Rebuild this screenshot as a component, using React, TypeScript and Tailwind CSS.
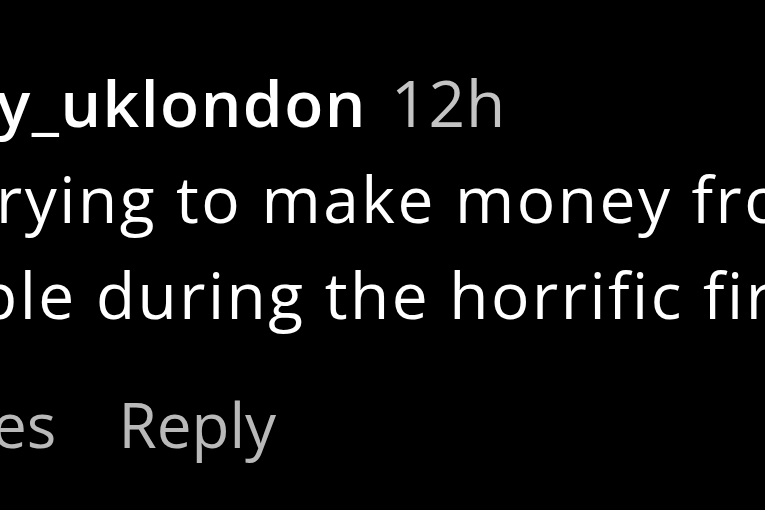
export default function App() {
  return (
    <div
      className="w-[765px] h-[510px] bg-black overflow-hidden text-white"
      style={{ fontFamily: '"Open Sans", "Noto Sans", sans-serif' }}
    >
      <div className="pt-[55px] flex flex-col leading-[96px] text-[64px] tracking-[2.5px] whitespace-nowrap">
        <div className="flex items-baseline gap-[24px] -ml-[4px]">
          <span className="font-semibold text-white tracking-[1.5px]">y_uklondon</span>
          <span className="text-[#c4c4c4] tracking-[1px]">12h</span>
        </div>
        <div className="-ml-[4px]">rying to make money from</div>
        <div className="-ml-[22px]">ple during the horrific fire</div>
        <div className="flex items-baseline gap-[62px] mt-[33px] text-[62px] tracking-normal text-[#b9b9b9] -ml-[8px]">
          <span>es</span>
          <span>Reply</span>
        </div>
      </div>
    </div>
  );
}
